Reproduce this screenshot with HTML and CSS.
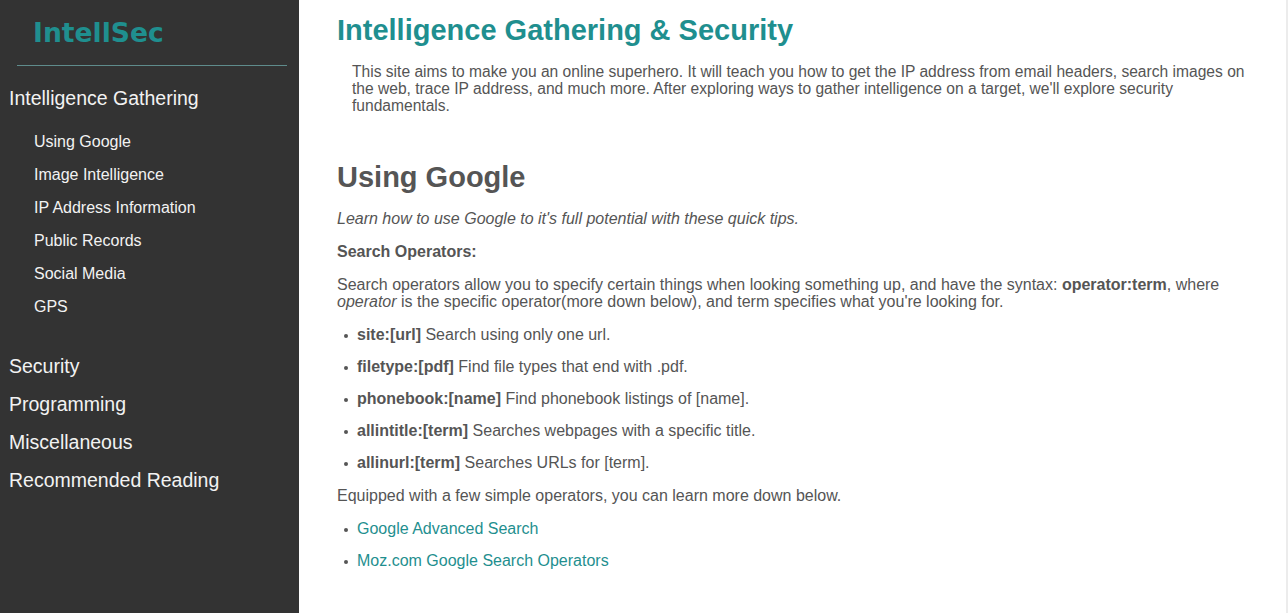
FILE: index.html
```html
<!DOCTYPE html>
<html>
<head>
<meta charset="utf-8">
<title>IntellSec</title>
<link rel="stylesheet" href="styles.css">
</head>
<body>
<div class="page">
  <nav class="sidebar">
    <div class="logo">IntellSec</div>
    <hr class="rule">
    <ul class="nav">
      <li class="section">
        <a class="section-link" href="#">Intelligence Gathering</a>
        <ul class="sub">
          <li><a href="#">Using Google</a></li>
          <li><a href="#">Image Intelligence</a></li>
          <li><a href="#">IP Address Information</a></li>
          <li><a href="#">Public Records</a></li>
          <li><a href="#">Social Media</a></li>
          <li><a href="#">GPS</a></li>
        </ul>
      </li>
      <li class="section"><a class="section-link" href="#">Security</a></li>
      <li class="section"><a class="section-link" href="#">Programming</a></li>
      <li class="section"><a class="section-link" href="#">Miscellaneous</a></li>
      <li class="section"><a class="section-link" href="#">Recommended Reading</a></li>
    </ul>
  </nav>
  <main class="main">
    <h1 class="title">Intelligence Gathering &amp; Security</h1>
    <p class="intro">This site aims to make you an online superhero. It will teach you how to get the IP address from email headers, search images on the web, trace IP address, and much more. After exploring ways to gather intelligence on a target, we'll explore security fundamentals.</p>
    <h2 class="heading">Using Google</h2>
    <p class="text"><em>Learn how to use Google to it's full potential with these quick tips.</em></p>
    <p class="text"><strong>Search Operators:</strong></p>
    <p class="text">Search operators allow you to specify certain things when looking something up, and have the syntax: <strong>operator:term</strong>, where <em>operator</em> is the specific operator(more down below), and term specifies what you're looking for.</p>
    <ul class="list">
      <li><strong>site:[url]</strong> Search using only one url.</li>
      <li><strong>filetype:[pdf]</strong> Find file types that end with .pdf.</li>
      <li><strong>phonebook:[name]</strong> Find phonebook listings of [name].</li>
      <li><strong>allintitle:[term]</strong> Searches webpages with a specific title.</li>
      <li><strong>allinurl:[term]</strong> Searches URLs for [term].</li>
    </ul>
    <p class="text">Equipped with a few simple operators, you can learn more down below.</p>
    <ul class="list">
      <li><a class="link" href="#">Google Advanced Search</a></li>
      <li><a class="link" href="#">Moz.com Google Search Operators</a></li>
    </ul>
  </main>
</div>
</body>
</html>
```

FILE: styles.css
```css
html, body {
  margin: 0;
  padding: 0;
  height: 100%;
}
body {
  font-family: "Liberation Sans", Arial, sans-serif;
  background: #fff;
  overflow: hidden;
}
.page {
  display: flex;
  height: 613px;
}
.sidebar {
  width: 299px;
  flex: 0 0 299px;
  background: #333333;
  box-sizing: border-box;
  padding-top: 16px;
}
.logo {
  font-family: "DejaVu Sans", Verdana, sans-serif;
  font-weight: bold;
  font-size: 26.6px;
  line-height: 34px;
  color: #1f8f8f;
  padding-left: 33px;
}
.rule {
  margin: 15px 12px 0 17px;
  border: 0;
  border-top: 1px solid #5f8c8c;
  height: 0;
}
.nav {
  list-style: none;
  margin: 0;
  padding: 0;
}
.nav a {
  text-decoration: none;
  color: #f2f2f2;
}
.section-link {
  display: block;
  font-size: 19.5px;
  line-height: 22px;
  padding: 8px 0 8px 9px;
}
.nav > .section:first-child > .section-link {
  padding-top: 21px;
}
.sub {
  list-style: none;
  margin: 0 0 23px 0;
  padding: 0 0 0 34px;
}
.sub li a {
  display: block;
  font-size: 16px;
  line-height: 18px;
  padding: 7px 0 8px 0;
}
.sub li:first-child a {
  padding-top: 16px;
}
.main {
  flex: 1;
  padding: 0 0 0 38px;
  border-right: 2px solid #ececec;
  color: #555555;
}
.title {
  margin: 12px 0 0 0;
  font-size: 29px;
  line-height: 36px;
  color: #1f8f8f;
  font-weight: bold;
}
.intro {
  margin: 15px 29px 0 15px;
  font-size: 15.6px;
  line-height: 17px;
}
.heading {
  margin: 45px 0 0 0;
  font-size: 29px;
  line-height: 36px;
  font-weight: bold;
  color: #555555;
}
.text {
  margin: 16px 0 0 0;
  font-size: 16px;
  line-height: 17px;
  padding-right: 40px;
}
.heading + .text {
  margin-top: 15px;
}
.list {
  margin: 16px 0 0 0;
  padding: 0 0 0 20px;
  font-size: 16px;
  line-height: 17px;
  list-style: none;
}
.list li {
  margin-top: 15px;
}
.list li::before {
  content: "";
  display: inline-block;
  width: 4px;
  height: 4px;
  border-radius: 50%;
  background: #555555;
  vertical-align: middle;
  margin: 0 9px 0 -13px;
}
.list li:first-child {
  margin-top: 0;
}
.link {
  color: #1f8f8f;
  text-decoration: none;
}
```
